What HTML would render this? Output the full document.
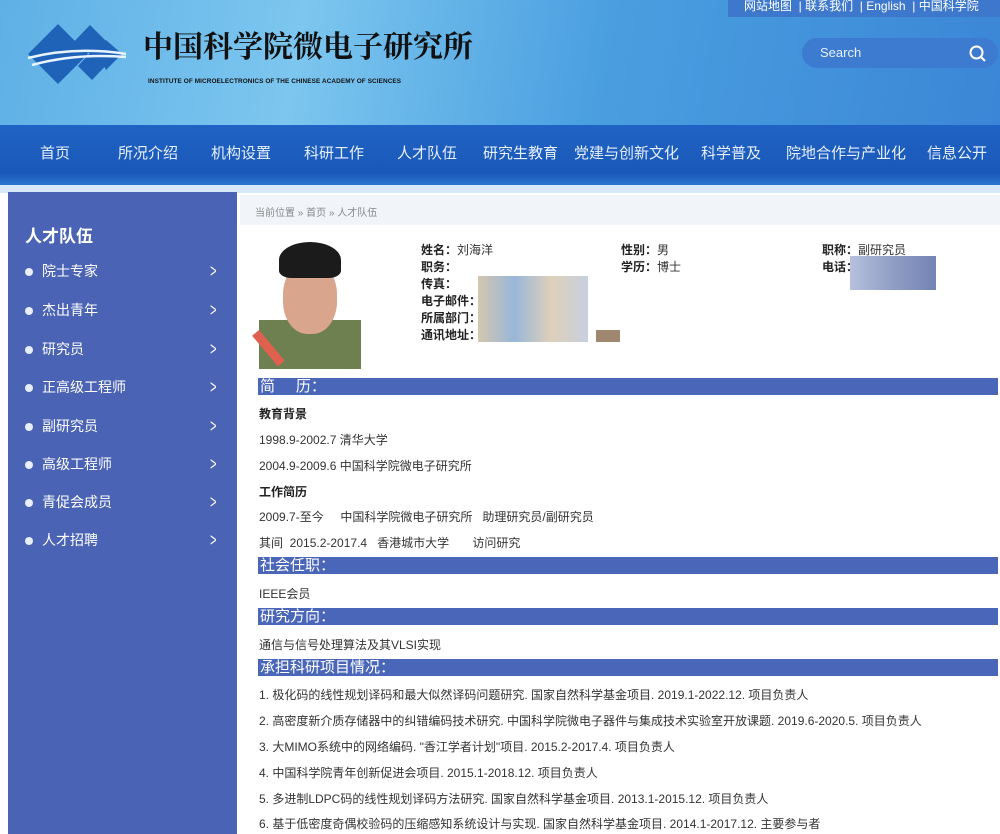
<!DOCTYPE html>
<html><head><meta charset="utf-8"><style>
*{margin:0;padding:0;box-sizing:border-box}
body{width:1000px;height:834px;overflow:hidden;background:#fff;font-family:"Liberation Sans","Noto Sans CJK SC",sans-serif;position:relative;color:#333}
.hdr{position:absolute;left:0;top:0;width:1000px;height:125px;background:linear-gradient(100deg,#5fb0e6 0%,#7cc6ef 30%,#4a9fe0 60%,#3b86d6 100%)}
.nav{position:absolute;left:0;top:125px;width:1000px;height:60px;background:linear-gradient(#1f63c4,#1a58b8 80%,#2b74d0);}
.nav span{position:absolute;top:17px;color:#e8f0ff;font-size:15px}
.strip{position:absolute;left:0;top:185px;width:1000px;height:8px;background:#d9e8f8}
.side{position:absolute;left:8px;top:192px;width:229px;height:642px;background:#4a63b4;color:#fff}
.side h3{position:absolute;left:17px;top:30px;font-size:17px}
.side .it{position:absolute;left:17px;font-size:14px;width:200px}
.side .it:before{content:"";position:absolute;left:0;top:6px;width:8px;height:8px;border-radius:50%;background:#e8eefc}
.side .it span{position:absolute;left:17px;top:-1px}
.side .it i{position:absolute;left:183px;top:-1px;font-style:normal;font-size:18px;transform:scaleX(.6)}
.crumb{position:absolute;left:240px;top:195px;width:760px;height:30px;background:#f1f5fa;font-size:10px;color:#888;padding:9px 15px}
.t{position:absolute;font-size:12px;color:#333;white-space:nowrap}
.b{font-weight:bold;color:#222}
.bar{position:absolute;left:258px;width:740px;height:17px;background:#4a66b8;color:#fff;font-size:15px;line-height:17px;padding-left:2px}
</style></head><body>
<div class="hdr"></div>
<svg style="position:absolute;left:26px;top:20px" width="106" height="70" viewBox="0 0 106 70">
<polygon points="2,34 32,4 62,34 32,64" fill="#1f63b8"/>
<polygon points="40,30 64,5 92,33 66,60 52,46 64,33" fill="#1f63b8"/>
<polygon points="70,30 80,20 96,34 80,50" fill="#1f63b8"/>
<path d="M2,38 Q50,26 100,34 M6,45 Q50,33 100,37" stroke="#e8f4ff" stroke-width="2.5" fill="none"/>
</svg>
<div style="position:absolute;left:143px;top:22px;font-size:30px;font-family:'Noto Serif CJK SC',serif;color:#111;font-weight:bold;letter-spacing:0">中国科学院微电子研究所</div>
<div style="position:absolute;left:148px;top:78px;font-size:6.4px;font-weight:bold;color:#111;letter-spacing:.1px">INSTITUTE OF MICROELECTRONICS OF THE CHINESE ACADEMY OF SCIENCES</div>
<div style="position:absolute;left:728px;top:0;width:272px;height:17px;background:#3e78cc;color:#fff;font-size:12px;padding-left:16px;line-height:13px">网站地图 &nbsp;| 联系我们 &nbsp;| English &nbsp;| 中国科学院</div>
<div style="position:absolute;left:802px;top:38px;width:196px;height:30px;border-radius:15px;background:#3d7bd0;color:#e6f0ff;font-size:13px;padding:7px 0 0 18px">Search<svg style="position:absolute;right:12px;top:7px" width="17" height="17"><circle cx="7.5" cy="7.5" r="6" stroke="#fff" stroke-width="2" fill="none"/><line x1="12" y1="12" x2="16" y2="16" stroke="#fff" stroke-width="2"/></svg></div>
<div class="nav">
<span style="left:40px">首页</span><span style="left:118px">所况介绍</span><span style="left:211px">机构设置</span><span style="left:304px">科研工作</span><span style="left:397px">人才队伍</span><span style="left:483px">研究生教育</span><span style="left:574px">党建与创新文化</span><span style="left:701px">科学普及</span><span style="left:786px">院地合作与产业化</span><span style="left:927px">信息公开</span>
</div>
<div class="strip"></div>
<div class="side"><h3>人才队伍</h3>
<div class="it" style="top:70px"><span>院士专家</span><i>&gt;</i></div>
<div class="it" style="top:109px"><span>杰出青年</span><i>&gt;</i></div>
<div class="it" style="top:148px"><span>研究员</span><i>&gt;</i></div>
<div class="it" style="top:186px"><span>正高级工程师</span><i>&gt;</i></div>
<div class="it" style="top:225px"><span>副研究员</span><i>&gt;</i></div>
<div class="it" style="top:263px"><span>高级工程师</span><i>&gt;</i></div>
<div class="it" style="top:301px"><span>青促会成员</span><i>&gt;</i></div>
<div class="it" style="top:339px"><span>人才招聘</span><i>&gt;</i></div>
</div>
<div class="crumb">当前位置 » 首页 » 人才队伍</div>
<div style="position:absolute;left:259px;top:240px;width:102px;height:129px;background:#fff">
<div style="position:absolute;left:0;top:80px;width:102px;height:49px;background:#6e8050"></div>
<div style="position:absolute;left:24px;top:22px;width:54px;height:72px;border-radius:45%;background:#d9a58c"></div>
<div style="position:absolute;left:20px;top:2px;width:62px;height:36px;border-radius:50% 50% 20% 20%;background:#1b1b1b"></div>
<div style="position:absolute;left:0;top:90px;width:40px;height:9px;background:#e06050;transform:rotate(50deg);transform-origin:0 0"></div>
</div>
<div class="t" style="left:421px;top:241px"><b class="b">姓名：</b>刘海洋</div>
<div class="t" style="left:421px;top:258px"><b class="b">职务：</b></div>
<div class="t" style="left:421px;top:275px"><b class="b">传真：</b></div>
<div class="t" style="left:421px;top:292px"><b class="b">电子邮件：</b></div>
<div class="t" style="left:421px;top:309px"><b class="b">所属部门：</b></div>
<div class="t" style="left:421px;top:326px"><b class="b">通讯地址：</b></div>
<div class="t" style="left:621px;top:241px"><b class="b">性别：</b>男</div>
<div class="t" style="left:621px;top:258px"><b class="b">学历：</b>博士</div>
<div class="t" style="left:822px;top:241px"><b class="b">职称：</b>副研究员</div>
<div class="t" style="left:822px;top:258px"><b class="b">电话：</b></div>
<div style="position:absolute;left:478px;top:276px;width:110px;height:66px;background:linear-gradient(90deg,#c8b89a,#7fa4d0,#d6c5a8,#b8c4d8);opacity:.8"></div>
<div style="position:absolute;left:596px;top:330px;width:24px;height:12px;background:#a08870"></div>
<div style="position:absolute;left:850px;top:256px;width:86px;height:34px;background:linear-gradient(90deg,#aab6d8,#7d8cba,#5a6ea8);opacity:.85"></div>
<div class="bar" style="top:378px">简 &nbsp; &nbsp; 历：</div>
<div class="t b" style="left:259px;top:405px">教育背景</div>
<div class="t" style="left:259px;top:431px">1998.9-2002.7 清华大学</div>
<div class="t" style="left:259px;top:457px">2004.9-2009.6 中国科学院微电子研究所</div>
<div class="t b" style="left:259px;top:483px">工作简历</div>
<div class="t" style="left:259px;top:508px">2009.7-至今 &nbsp; &nbsp; 中国科学院微电子研究所 &nbsp; 助理研究员/副研究员</div>
<div class="t" style="left:259px;top:534px">其间 &nbsp;2015.2-2017.4 &nbsp; 香港城市大学 &nbsp; &nbsp; &nbsp; 访问研究</div>
<div class="bar" style="top:557px">社会任职：</div>
<div class="t" style="left:259px;top:585px">IEEE会员</div>
<div class="bar" style="top:608px">研究方向：</div>
<div class="t" style="left:259px;top:636px">通信与信号处理算法及其VLSI实现</div>
<div class="bar" style="top:659px">承担科研项目情况：</div>
<div class="t" style="left:259px;top:686px">1. 极化码的线性规划译码和最大似然译码问题研究. 国家自然科学基金项目. 2019.1-2022.12. 项目负责人</div>
<div class="t" style="left:259px;top:712px">2. 高密度新介质存储器中的纠错编码技术研究. 中国科学院微电子器件与集成技术实验室开放课题. 2019.6-2020.5. 项目负责人</div>
<div class="t" style="left:259px;top:738px">3. 大MIMO系统中的网络编码. "香江学者计划"项目. 2015.2-2017.4. 项目负责人</div>
<div class="t" style="left:259px;top:764px">4. 中国科学院青年创新促进会项目. 2015.1-2018.12. 项目负责人</div>
<div class="t" style="left:259px;top:790px">5. 多进制LDPC码的线性规划译码方法研究. 国家自然科学基金项目. 2013.1-2015.12. 项目负责人</div>
<div class="t" style="left:259px;top:815px">6. 基于低密度奇偶校验码的压缩感知系统设计与实现. 国家自然科学基金项目. 2014.1-2017.12. 主要参与者</div>
</body></html>
